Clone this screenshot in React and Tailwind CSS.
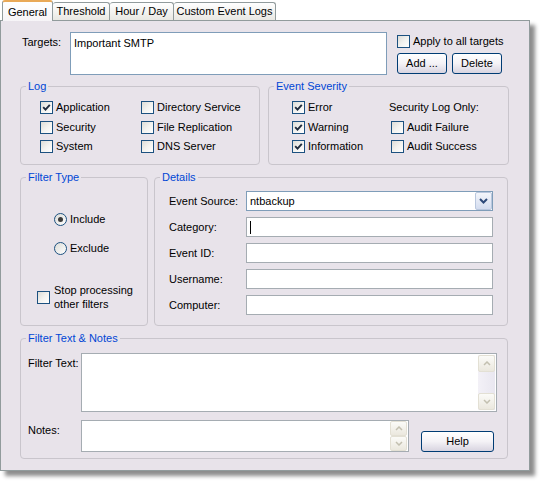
import React from 'react';

const Check = ({ checked }) => (
  <span className="w-[13px] h-[13px] border border-[#1c5180] bg-linear-to-br from-[#dcdcd7] via-[#f2f2ef] to-white flex items-center justify-center shrink-0">
    {checked && (
      <svg width="9" height="9" viewBox="0 0 9 9">
        <path d="M1.2 4.2 L3.5 6.6 L7.8 1.8" stroke="#1f2b3d" strokeWidth="1.9" fill="none" />
      </svg>
    )}
  </span>
);

const Radio = ({ on }) => (
  <span className="w-[13px] h-[13px] rounded-full border border-[#1c5180] bg-linear-to-br from-[#dcdcd7] to-white flex items-center justify-center shrink-0">
    {on && <span className="w-[5px] h-[5px] rounded-full bg-[#3b3b3b]" />}
  </span>
);

const CheckRow = ({ checked, label, className = '' }) => (
  <div className={`flex items-center gap-[3px] h-[13px] ${className}`}>
    <Check checked={checked} />
    <span>{label}</span>
  </div>
);

const Group = ({ title, className = '', children }) => (
  <fieldset className={`border border-[#c9c5cc] rounded-[4px] ${className}`}>
    <legend className="ml-[5px] px-[2px] leading-[13px] text-[#0046d5]">{title}</legend>
    {children}
  </fieldset>
);

const XpButton = ({ children, className = '' }) => (
  <button className={`h-[21px] border border-[#003c74] rounded-[3px] bg-linear-to-b from-white via-[#f4f2f6] to-[#d8d4e0] flex items-center justify-center ${className}`}>
    {children}
  </button>
);

const ScrollArrow = ({ down }) => (
  <span className="w-[17px] h-[17px] border border-[#e3e0d4] rounded-[2px] bg-linear-to-b from-[#fbfbf8] to-[#ebe8de] flex items-center justify-center">
    <svg width="8" height="5" viewBox="0 0 8 5">
      <path d={down ? 'M1 1 L4 4 L7 1' : 'M1 4 L4 1 L7 4'} stroke="#c3c0b0" strokeWidth="1.5" fill="none" />
    </svg>
  </span>
);

const Field = ({ label, children }) => (
  <div className="flex items-center h-[20px]">
    <span className="w-[77px]">{label}</span>
    {children}
  </div>
);

const TextBox = ({ children }) => (
  <div className="w-[247px] h-[20px] border border-[#a5acb2] bg-white flex items-center pl-[3px]">{children}</div>
);

const App = () => {
  return (
    <div className="w-[543px] h-[485px] bg-white text-black text-[11px] font-['Liberation_Sans',Arial,sans-serif] overflow-hidden">
      {/* Tabs */}
      <div className="flex items-start h-[20px] pl-[2px]">
        <div className="relative z-10 h-[21px] w-[51px] border border-[#919b9c] border-b-0 border-t-[2px] border-t-[#e9a957] rounded-t-[3px] bg-linear-to-b from-white to-[#f6f4f7] flex items-start justify-center pt-[2px]">
          General
        </div>
        <div className="mt-[2px] h-[18px] w-[57px] border border-[#919b9c] border-b-0 border-l-0 rounded-t-[3px] bg-linear-to-b from-white to-[#e9e8e3] flex items-center justify-center">
          Threshold
        </div>
        <div className="mt-[2px] h-[18px] w-[64px] border border-[#919b9c] border-b-0 border-l-0 rounded-t-[3px] bg-linear-to-b from-white to-[#e9e8e3] flex items-center justify-center">
          Hour / Day
        </div>
        <div className="mt-[2px] h-[18px] w-[102px] border border-[#919b9c] border-b-0 border-l-0 rounded-t-[3px] bg-linear-to-b from-white to-[#e9e8e3] flex items-center justify-center">
          Custom Event Logs
        </div>
      </div>

      {/* Panel */}
      <div className="w-[530px] h-[451px] border border-[#919b9c] bg-[#e8e3ea] shadow-[5px_5px_4px_rgba(0,0,0,0.45)]">
        {/* Targets row */}
        <div className="flex mt-[11px] ml-[21px]">
          <span className="w-[48px] pt-[2px]">Targets:</span>
          <div className="w-[317px] h-[43px] border border-[#7f9db9] bg-white pl-[3px] pt-[2px]">Important SMTP</div>
          <div className="ml-[10px] flex flex-col">
            <CheckRow checked={false} label="Apply to all targets" className="mt-[3px]" />
            <div className="flex gap-[5px] mt-[5px]">
              <XpButton className="w-[50px]">Add ...</XpButton>
              <XpButton className="w-[50px]">Delete</XpButton>
            </div>
          </div>
        </div>

        {/* Log / Event Severity */}
        <div className="flex gap-[8px] ml-[19px] mt-[5px]">
          <Group title="Log" className="w-[240px] h-[85px]">
            <div className="grid grid-cols-[101px_1fr] gap-y-[6.5px] pl-[19px] pt-[8px]">
              <CheckRow checked label="Application" />
              <CheckRow label="Directory Service" />
              <CheckRow label="Security" />
              <CheckRow label="File Replication" />
              <CheckRow label="System" />
              <CheckRow label="DNS Server" />
            </div>
          </Group>
          <Group title="Event Severity" className="w-[241px] h-[85px]">
            <div className="grid grid-cols-[97px_1fr] gap-y-[6.5px] pl-[23px] pt-[8px]">
              <CheckRow checked label="Error" />
              <div className="h-[13px] flex items-center">Security Log Only:</div>
              <CheckRow checked label="Warning" />
              <CheckRow label="Audit Failure" className="ml-[2px]" />
              <CheckRow checked label="Information" />
              <CheckRow label="Audit Success" className="ml-[2px]" />
            </div>
          </Group>
        </div>

        {/* Filter Type / Details */}
        <div className="flex gap-[6px] ml-[19px] mt-[6px]">
          <Group title="Filter Type" className="w-[128px] h-[155px]">
            <div className="flex flex-col pt-[28px]">
              <div className="flex items-center gap-[3px] pl-[33px] h-[14px]">
                <Radio on />
                <span>Include</span>
              </div>
              <div className="flex items-center gap-[3px] pl-[33px] h-[14px] mt-[15px]">
                <Radio />
                <span>Exclude</span>
              </div>
              <div className="flex items-center gap-[4px] pl-[16px] mt-[28px]">
                <Check />
                <span className="leading-[14px]">Stop processing<br />other filters</span>
              </div>
            </div>
          </Group>
          <Group title="Details" className="w-[354px] h-[155px]">
            <div className="flex flex-col gap-[6px] pl-[14px] pt-[7px]">
              <Field label="Event Source:">
                <div className="w-[247px] h-[20px] border border-[#7f9db9] bg-white flex items-center">
                  <span className="flex-1 pl-[3px]">ntbackup</span>
                  <span className="w-[17px] h-[18px] border border-[#b9c7de] rounded-[2px] bg-linear-to-b from-[#f4f6fb] to-[#d3dcef] flex items-center justify-center">
                    <svg width="9" height="6" viewBox="0 0 9 6">
                      <path d="M1 1 L4.5 4.5 L8 1" stroke="#2d4a7a" strokeWidth="2" fill="none" />
                    </svg>
                  </span>
                </div>
              </Field>
              <Field label="Category:">
                <TextBox>
                  <span className="w-px h-[13px] bg-black" />
                </TextBox>
              </Field>
              <Field label="Event ID:">
                <TextBox />
              </Field>
              <Field label="Username:">
                <TextBox />
              </Field>
              <Field label="Computer:">
                <TextBox />
              </Field>
            </div>
          </Group>
        </div>

        {/* Filter Text & Notes */}
        <div className="ml-[19px] mt-[6px]">
          <Group title="Filter Text & Notes" className="w-[488px] h-[127px]">
            <div className="flex flex-col pl-[7px] pt-[8px]">
              <div className="flex">
                <span className="w-[53px] pt-[2px]">Filter Text:</span>
                <div className="w-[416px] h-[59px] border border-[#a5acb2] bg-white flex justify-end pr-[1px] py-px">
                  <div className="w-[17px] flex flex-col justify-between bg-linear-to-r from-[#f3f1f7] to-[#e9e7f0]">
                    <ScrollArrow />
                    <ScrollArrow down />
                  </div>
                </div>
              </div>
              <div className="flex mt-[8px]">
                <span className="w-[53px] pt-[2px]">Notes:</span>
                <div className="w-[328px] h-[32px] border border-[#a5acb2] bg-white flex justify-end pr-[1px]">
                  <div className="w-[17px] flex flex-col justify-center">
                    <span className="w-[17px] h-[15px] border border-[#e3e0d4] rounded-[2px] bg-linear-to-b from-[#fbfbf8] to-[#ebe8de] flex items-center justify-center">
                      <svg width="8" height="5" viewBox="0 0 8 5"><path d="M1 4 L4 1 L7 4" stroke="#c3c0b0" strokeWidth="1.5" fill="none" /></svg>
                    </span>
                    <span className="w-[17px] h-[15px] border border-[#e3e0d4] rounded-[2px] bg-linear-to-b from-[#fbfbf8] to-[#ebe8de] flex items-center justify-center">
                      <svg width="8" height="5" viewBox="0 0 8 5"><path d="M1 1 L4 4 L7 1" stroke="#c3c0b0" strokeWidth="1.5" fill="none" /></svg>
                    </span>
                  </div>
                </div>
                <XpButton className="w-[73px] ml-[12px] self-end">Help</XpButton>
              </div>
            </div>
          </Group>
        </div>
      </div>
    </div>
  );
};

export default App;
